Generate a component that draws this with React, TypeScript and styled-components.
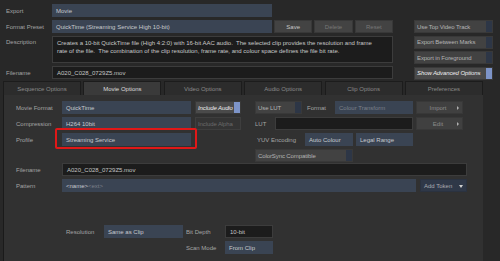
import React from "react";
import styled, { createGlobalStyle, css } from "styled-components";

const GlobalStyle = createGlobalStyle`
  html, body {
    margin: 0;
    padding: 0;
    background: #282828;
  }
  body {
    width: 500px;
    height: 261px;
    overflow: hidden;
    font-family: "Liberation Sans", Arial, sans-serif;
    font-size: 6px;
    color: #a4a4a4;
  }
  * {
    box-sizing: border-box;
  }
`;

const Screen = styled.div`
  width: 500px;
  height: 261px;
  display: flex;
  flex-direction: column;
  background: #282828;
`;

const Header = styled.div`
  display: flex;
  height: 81px;
  flex-shrink: 0;
`;

const HeaderForm = styled.div`
  width: 393px;
  padding: 4px 0 0 6px;
  display: grid;
  grid-template-columns: 46px 1fr;
  grid-template-rows: 13px 13px 27px 13px;
  row-gap: 3px;
`;

const Label = styled.div<{ $top?: boolean }>`
  display: flex;
  align-items: ${(p) => (p.$top ? "flex-start" : "center")};
  padding-top: ${(p) => (p.$top ? "3px" : "0")};
  color: #a4a4a4;
  white-space: nowrap;
`;

const Field = styled.div<{ $w?: number; $dark?: boolean }>`
  display: flex;
  align-items: center;
  height: 13px;
  padding: 0 4px;
  white-space: nowrap;
  overflow: hidden;
  ${(p) => (p.$w ? `width: ${p.$w}px; flex-shrink: 0;` : "flex: 1;")}
  ${(p) =>
    p.$dark
      ? css`
          background: #1c1c1c;
          border: 1px solid #3c3c3c;
          color: #c4c4c4;
        `
      : css`
          background: #3a4453;
          color: #c8cace;
        `}
`;

const FieldRow = styled.div`
  display: flex;
  gap: 2px;
`;

const PlainButton = styled.div<{ $disabled?: boolean }>`
  flex: 1;
  display: flex;
  align-items: center;
  justify-content: center;
  height: 13px;
  background: #434343;
  border: 1px solid #383838;
  color: ${(p) => (p.$disabled ? "#777" : "#c8c8c8")};
`;

const TextBox = styled.div`
  background: #1c1c1c;
  border: 1px solid #3c3c3c;
  color: #c8c8c8;
  padding: 2px 4px;
  line-height: 8px;
  white-space: nowrap;
  overflow: hidden;
`;

const SideColumn = styled.div`
  margin-left: 21px;
  width: 79px;
  padding-top: 20px;
  display: flex;
  flex-direction: column;
  gap: 2.67px;
`;

const Toggle = styled.div<{ $on?: boolean; $w?: number; $dim?: boolean }>`
  position: relative;
  display: flex;
  align-items: center;
  height: 13px;
  padding: 0 7px 0 2px;
  white-space: nowrap;
  overflow: hidden;
  letter-spacing: -0.1px;
  ${(p) => (p.$w ? `width: ${p.$w}px; flex-shrink: 0;` : "")}
  background: ${(p) => (p.$dim ? "#343434" : p.$on ? "#4a4a4a" : "#424242")};
  border: 1px solid ${(p) => (p.$dim ? "#3e3e3e" : "#393939")};
  color: ${(p) => (p.$dim ? "#6a6a6a" : p.$on ? "#eeeeee" : "#b4b4b4")};
  font-style: ${(p) => (p.$on ? "italic" : "normal")};

  &::after {
    content: "";
    position: absolute;
    top: 0;
    right: 0;
    bottom: 0;
    width: 6px;
    background: ${(p) => (p.$dim ? "#343434" : p.$on ? "#7d94c8" : "#2d3646")};
  }
`;

const Tabs = styled.div`
  display: flex;
  gap: 2.4px;
  height: 14px;
  padding-left: 3px;
  flex-shrink: 0;
`;

const Tab = styled.div<{ $active?: boolean }>`
  width: 78px;
  display: flex;
  align-items: center;
  justify-content: center;
  border: 1px solid #1c1c1c;
  border-bottom: none;
  background: ${(p) => (p.$active ? "#3a3a3a" : "#2c2c2c")};
  color: ${(p) => (p.$active ? "#dcdcdc" : "#8a8a8a")};
`;

const Panel = styled.div`
  flex: 1;
  margin-left: 3px;
  width: 480px;
  background: #313131;
  border-left: 1px solid #1a1a1a;
  padding: 6px 0 0 12px;
  display: flex;
  flex-direction: column;
`;

const PanelTop = styled.div`
  display: flex;
  gap: 14px;
`;

const Block = styled.div`
  position: relative;
  display: flex;
  flex-direction: column;
  gap: 3px;
`;

const Row = styled.div`
  display: flex;
  align-items: center;
  height: 13px;
`;

const RowLabel = styled.div<{ $w: number }>`
  width: ${(p) => p.$w}px;
  flex-shrink: 0;
  color: #a4a4a4;
  white-space: nowrap;
`;

const Gap = styled.div<{ $w: number }>`
  width: ${(p) => p.$w}px;
  flex-shrink: 0;
`;

const Highlight = styled.div`
  position: absolute;
  left: 39px;
  top: 27px;
  width: 142px;
  height: 21px;
  border: 2px solid #e01818;
  border-radius: 2px;
`;

const MenuButton = styled.div<{ $w: number; $blue?: boolean; $down?: boolean }>`
  position: relative;
  width: ${(p) => p.$w}px;
  height: 13px;
  flex-shrink: 0;
  display: flex;
  align-items: center;
  justify-content: ${(p) => (p.$blue ? "flex-start" : "center")};
  padding: 0 6px 0 3px;
  background: ${(p) => (p.$blue ? "#2f3848" : "#404040")};
  border: 1px solid ${(p) => (p.$blue ? "#2a3240" : "#383838")};
  color: ${(p) => (p.$blue ? "#a8aab0" : "#8c8c8c")};

  &::after {
    content: "";
    position: absolute;
    right: 3px;
    top: 50%;
    ${(p) =>
      p.$down
        ? css`
            margin-top: -1px;
            border-left: 2.5px solid transparent;
            border-right: 2.5px solid transparent;
            border-top: 3px solid #d0d0d0;
          `
        : css`
            margin-top: -2px;
            border-top: 2px solid transparent;
            border-bottom: 2px solid transparent;
            border-left: 2.5px solid #b0b0b0;
          `}
  }
`;

const Lower = styled.div`
  margin-top: 1px;
  display: flex;
  flex-direction: column;
  gap: 3px;
  width: 451px;
`;

const Token = styled.span<{ $dim?: boolean }>`
  color: ${(p) => (p.$dim ? "#7c808a" : "#c8cad0")};
`;

const Output = styled.div`
  margin: 33px 0 0 50px;
  display: grid;
  grid-template-columns: 38px 79px 3px 39px 48px;
  grid-template-rows: 13px 13px;
  row-gap: 3px;
  align-items: center;
`;

const tabs = [
  "Sequence Options",
  "Movie Options",
  "Video Options",
  "Audio Options",
  "Clip Options",
  "Preferences",
];

export default function App() {
  return (
    <Screen>
      <GlobalStyle />
      <Header>
        <HeaderForm>
          <Label>Export</Label>
          <FieldRow>
            <Field $w={220}>Movie</Field>
          </FieldRow>

          <Label>Format Preset</Label>
          <FieldRow>
            <Field $w={220}>QuickTime (Streaming Service High 10-bit)</Field>
            <PlainButton>Save</PlainButton>
            <PlainButton $disabled>Delete</PlainButton>
            <PlainButton $disabled>Reset</PlainButton>
          </FieldRow>

          <Label $top>Description</Label>
          <TextBox>
            Creates a 10-bit QuickTime file (High 4:2:0) with 16-bit AAC
            audio.&nbsp; The selected clip provides the resolution and frame
            <br />
            rate of the file.&nbsp; The combination of the clip resolution,
            frame rate, and colour space defines the file bit rate.
          </TextBox>

          <Label>Filename</Label>
          <Field $dark>A020_C028_0729Z5.mov</Field>
        </HeaderForm>

        <SideColumn>
          <Toggle>Use Top Video Track</Toggle>
          <Toggle>Export Between Marks</Toggle>
          <Toggle>Export in Foreground</Toggle>
          <Toggle $on>Show Advanced Options</Toggle>
        </SideColumn>
      </Header>

      <Tabs>
        {tabs.map((t) => (
          <Tab key={t} $active={t === "Movie Options"}>
            {t}
          </Tab>
        ))}
      </Tabs>

      <Panel>
        <PanelTop>
          <Block>
            <Row>
              <RowLabel $w={46}>Movie Format</RowLabel>
              <Field $w={129}>QuickTime</Field>
              <Gap $w={4} />
              <Toggle $on $w={46}>
                Include Audio
              </Toggle>
            </Row>
            <Row>
              <RowLabel $w={46}>Compression</RowLabel>
              <Field $w={129}>H264 10bit</Field>
              <Gap $w={4} />
              <Toggle $dim $w={46}>
                Include Alpha
              </Toggle>
            </Row>
            <Row>
              <RowLabel $w={46}>Profile</RowLabel>
              <Field $w={129}>Streaming Service</Field>
            </Row>
            <Highlight />
          </Block>

          <Block>
            <Row>
              <Toggle $w={47}>Use LUT</Toggle>
              <Gap $w={5} />
              <RowLabel $w={28}>Format</RowLabel>
              <Field $w={78}>
                <Token $dim>Colour Transform</Token>
              </Field>
              <Gap $w={3} />
              <MenuButton $w={47}>Import</MenuButton>
            </Row>
            <Row>
              <RowLabel $w={20}>LUT</RowLabel>
              <Field $w={138} $dark />
              <Gap $w={3} />
              <MenuButton $w={47}>Edit</MenuButton>
            </Row>
            <Row>
              <Gap $w={2} />
              <RowLabel $w={48}>YUV Encoding</RowLabel>
              <Field $w={48}>Auto Colour</Field>
              <Gap $w={3} />
              <Field $w={57}>Legal Range</Field>
            </Row>
            <Row>
              <Toggle $w={98}>ColorSync Compatible</Toggle>
            </Row>
          </Block>
        </PanelTop>

        <Lower>
          <Row>
            <RowLabel $w={46}>Filename</RowLabel>
            <Field $dark>A020_C028_0729Z5.mov</Field>
          </Row>
          <Row>
            <RowLabel $w={46}>Pattern</RowLabel>
            <Field>
              <Token>&lt;name&gt;</Token>
              <Token $dim>&lt;ext&gt;</Token>
            </Field>
            <Gap $w={4} />
            <MenuButton $w={47} $blue $down>
              Add Token
            </MenuButton>
          </Row>
        </Lower>

        <Output>
          <RowLabel $w={38}>Resolution</RowLabel>
          <Field $w={79}>Same as Clip</Field>
          <span />
          <RowLabel $w={39}>Bit Depth</RowLabel>
          <Field $w={48} $dark>
            10-bit
          </Field>
          <span />
          <span />
          <span />
          <RowLabel $w={39}>Scan Mode</RowLabel>
          <Field $w={48}>From Clip</Field>
        </Output>
      </Panel>
    </Screen>
  );
}
